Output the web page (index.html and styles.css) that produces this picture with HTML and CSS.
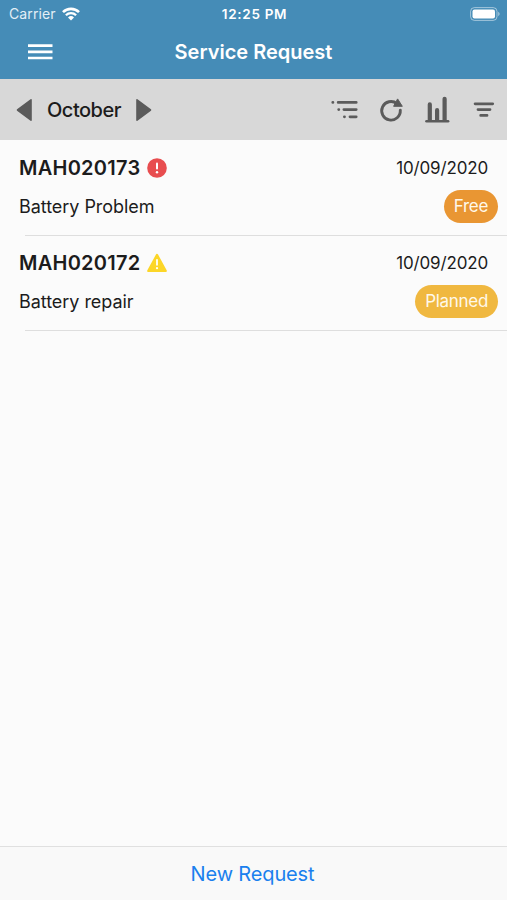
FILE: index.html
```html
<!DOCTYPE html>
<html lang="en">
<head>
  <meta charset="UTF-8">
  <meta name="viewport" content="width=device-width, initial-scale=1.0">
  <title>Service Request</title>
  <link rel="stylesheet" href="styles.css">
</head>
<body>
  <header>
    <div class="status-bar">
      <div class="carrier">
        <span>Carrier</span>
        <svg width="18" height="14" viewBox="0 0 18 14">
          <path d="M1 5.2a11.3 11.3 0 0 1 16 0" fill="none" stroke="#fff" stroke-width="2.6"/>
          <path d="M3.9 8.3a7.2 7.2 0 0 1 10.2 0" fill="none" stroke="#fff" stroke-width="2.3"/>
          <path d="M6 10.5a4.3 4.3 0 0 1 6 0l-3 3z" fill="#fff"/>
        </svg>
      </div>
      <span class="time">12:25 PM</span>
      <div class="battery">
        <svg width="30" height="14" viewBox="0 0 30 14">
          <rect x=".6" y=".6" width="26.4" height="12.8" rx="3.8" fill="none" stroke="#fff" stroke-opacity=".5"/>
          <rect x="2.5" y="2.5" width="22.5" height="9" rx="2" fill="#fff"/>
          <path d="M28.2 4.8q3 2.2 0 4.4z" fill="#fff" fill-opacity=".5"/>
        </svg>
      </div>
    </div>
    <div class="nav-bar">
      <button class="menu-btn" aria-label="Menu">
        <svg width="25" height="16" viewBox="0 0 25 16">
          <path d="M0 1.6h24.5M0 7.8h24.5M0 14h24.5" stroke="#fff" stroke-width="2.7"/>
        </svg>
      </button>
      <h1>Service Request</h1>
    </div>
  </header>

  <div class="toolbar">
    <div class="month">
      <svg width="16" height="24" viewBox="0 0 16 24">
        <path d="M1.5 12L15 1.8v20.4z" fill="#5b5b5b" stroke="#5b5b5b" stroke-width="1.6" stroke-linejoin="round"/>
      </svg>
      <span class="month-name">October</span>
      <svg width="16" height="24" viewBox="0 0 16 24">
        <path d="M14.5 12L1 1.8v20.4z" fill="#5b5b5b" stroke="#5b5b5b" stroke-width="1.6" stroke-linejoin="round"/>
      </svg>
    </div>
    <div class="actions">
      <svg width="28" height="28" viewBox="0 0 28 28">
        <path d="M2.8 6.4h.1M8.2 6.4h18M8.7 13.6h.1M13.9 13.6h12.3M14.4 20.8h.1M20 20.8h6.2" stroke="#5b5b5b" stroke-width="2.8" stroke-linecap="round"/>
      </svg>
      <svg width="28" height="28" viewBox="0 0 28 28">
        <path d="M23.3 14.2a9.3 9.3 0 1 1-3.4-6.6" fill="none" stroke="#5b5b5b" stroke-width="2.9" stroke-linecap="round"/>
        <path d="M20.6 2.9L25.3 10.3H16.6z" fill="#5b5b5b" stroke="#5b5b5b" stroke-linejoin="round"/>
      </svg>
      <svg width="28" height="28" viewBox="0 0 28 28">
        <path d="M6.8 8.4V24M14.1 14.2V24M21.6 2.8V24" stroke="#5b5b5b" stroke-width="4.2" stroke-linecap="round"/>
        <path d="M3.5 25.2h21.6" stroke="#5b5b5b" stroke-width="2.6" stroke-linecap="round"/>
      </svg>
      <svg width="28" height="28" viewBox="0 0 28 28">
        <path d="M5.1 7.8h17.6M8 13.6h12M10.7 19.4h6.3" stroke="#5b5b5b" stroke-width="2.8" stroke-linecap="round"/>
      </svg>
    </div>
  </div>

  <main>
    <div class="request">
      <div class="row">
        <h2>MAH020173</h2>
        <svg class="priority" width="20" height="20" viewBox="0 0 20 20">
          <circle cx="10" cy="10" r="9.8" fill="#e84d4f"/>
          <path d="M10 5.5v5" stroke="#fff" stroke-width="2" stroke-linecap="round"/>
          <circle cx="10" cy="14.3" r="1.2" fill="#fff"/>
        </svg>
        <span class="date">10/09/2020</span>
      </div>
      <div class="row">
        <p>Battery Problem</p>
        <span class="badge free">Free</span>
      </div>
    </div>
    <div class="request">
      <div class="row">
        <h2>MAH020172</h2>
        <svg class="priority" width="20" height="20" viewBox="0 0 20 20">
          <path d="M10 2L18.6 17.9H1.4z" fill="#fcd628" stroke="#fcd628" stroke-width="2.4" stroke-linejoin="round"/>
          <path d="M10 6.8v5" stroke="#fff" stroke-width="1.8" stroke-linecap="round"/>
          <circle cx="10" cy="15.2" r="1.1" fill="#fff"/>
        </svg>
        <span class="date">10/09/2020</span>
      </div>
      <div class="row">
        <p>Battery repair</p>
        <span class="badge planned">Planned</span>
      </div>
    </div>
  </main>

  <footer>
    <button class="new-btn">New Request</button>
  </footer>
</body>
</html>
```
FILE: styles.css
```css
* {
  box-sizing: border-box;
}
body {
  font-family: Inter, 'Liberation Sans', sans-serif;
  margin: 0;
  height: 100vh;
  display: flex;
  flex-direction: column;
  background: #fbfbfb;
  color: #1c1c1c;
  overflow: hidden;
}
svg {
  display: block;
  flex: none;
}
button {
  background: none;
  border: none;
  padding: 0;
  font-family: inherit;
  cursor: pointer;
}
header {
  height: 79px;
  background: #458cb7;
  color: #fff;
}
.status-bar {
  display: grid;
  grid-template-columns: 1fr auto 1fr;
  align-items: center;
  height: 27px;
  padding: 0 7px 0 9px;
}
.carrier {
  display: flex;
  align-items: center;
  gap: 6px;
  font-size: 14px;
  letter-spacing: 0.1px;
  color: #e3eff6;
}
.time {
  font-size: 13.5px;
  font-weight: 600;
  letter-spacing: 0.7px;
}
.battery {
  justify-self: end;
}
.nav-bar {
  display: grid;
  grid-template-columns: 1fr auto 1fr;
  align-items: center;
  height: 50px;
  padding: 0 28px;
}
.menu-btn {
  justify-self: start;
}
h1 {
  margin: 0;
  font-size: 20px;
  font-weight: 600;
}
.toolbar {
  display: flex;
  justify-content: space-between;
  align-items: center;
  height: 61px;
  padding: 0 9px 0 16px;
  background: #d8d8d8;
}
.month {
  display: flex;
  align-items: center;
  gap: 15px;
}
.month-name {
  font-size: 20px;
  font-weight: 500;
  letter-spacing: -0.5px;
}
.actions {
  display: flex;
  gap: 18.6px;
}
main {
  flex: 1;
  padding-top: 1px;
}
.request {
  height: 95px;
  padding: 8px 9px 0 19px;
  /* divider starts inset from the left edge */
  background: linear-gradient(#dedede, #dedede) 25px 100% / 100% 1px no-repeat;
}
.row {
  display: flex;
  align-items: center;
  height: 38px;
}
h2 {
  margin: 0;
  font-size: 20px;
  font-weight: 600;
  letter-spacing: 0.25px;
}
.priority {
  margin-left: 7px;
}
.date {
  margin: 0 10px 0 auto;
  font-size: 17px;
  letter-spacing: -0.15px;
}
p {
  margin: 0;
  font-size: 18px;
  letter-spacing: -0.05px;
}
.badge {
  margin-left: auto;
  height: 33px;
  padding: 0 10px;
  border-radius: 17px;
  line-height: 33px;
  font-size: 17px;
  letter-spacing: -0.3px;
  color: #fff8ea;
}
.free {
  background: #e99633;
}
.planned {
  background: #f0b840;
}
footer {
  display: flex;
  justify-content: center;
  align-items: center;
  height: 54px;
  padding-right: 2px;
  border-top: 1px solid #e0e0e0;
  background: #f9f9f9;
}
.new-btn {
  font-size: 20px;
  letter-spacing: -0.15px;
  color: #1a80ee;
}
```
